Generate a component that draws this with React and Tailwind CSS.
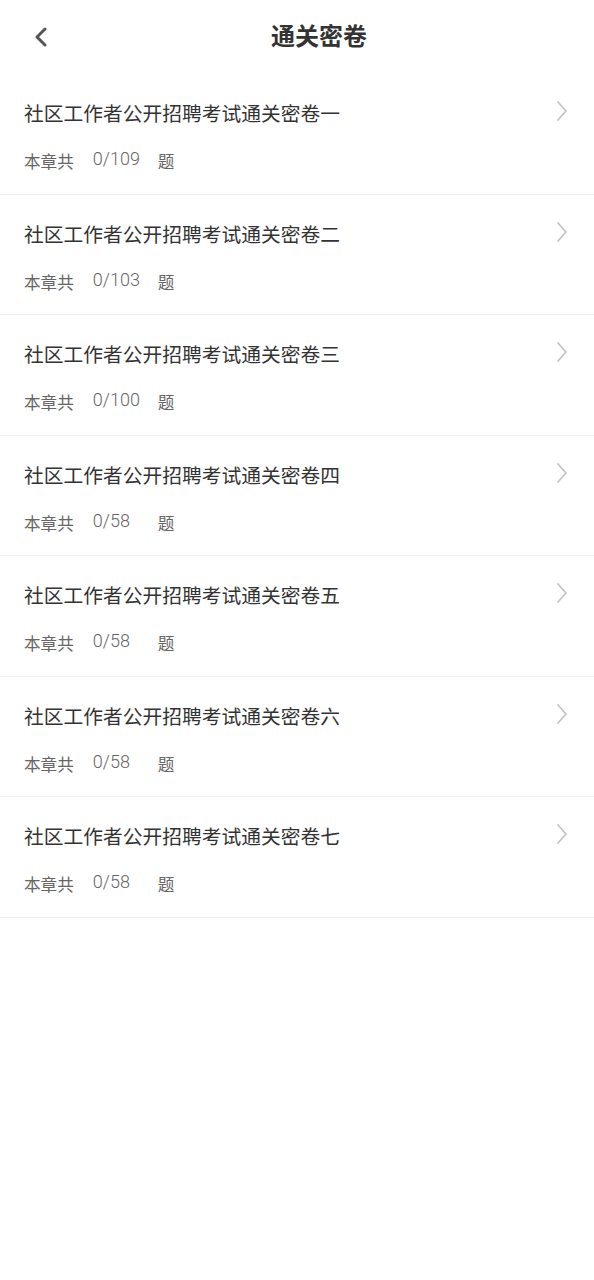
import React from "react";

const items = [
  ["一", "0/109"],
  ["二", "0/103"],
  ["三", "0/100"],
  ["四", "0/58"],
  ["五", "0/58"],
  ["六", "0/58"],
  ["七", "0/58"],
];

const font = { fontFamily: '"Noto Sans CJK SC", "Noto Sans", Roboto, sans-serif' };

export default function App() {
  return (
    <div className="w-[594px] min-h-[1280px] bg-white" style={font}>
      <div className="relative flex h-[74px] items-start pt-[23px] pl-[271px]">
        <svg className="absolute left-[32px] top-[26px]" width="18" height="22" viewBox="0 0 18 22" fill="none">
          <path d="M13 3 L5 11 L13 19" stroke="#555" strokeWidth="3" strokeLinecap="round" strokeLinejoin="round" />
        </svg>
        <h1 className="text-[24px] font-bold text-[#333] leading-[24px]">通关密卷</h1>
      </div>
      <div className="flex flex-col">
        {items.map(([n, c]) => (
          <div key={n} className="relative h-[120.5px] border-b border-[#f0f0f0] px-[24px]">
            <div className="pt-[27px] text-[19.75px] leading-[24px] text-[#333]">社区工作者公开招聘考试通关密卷{n}</div>
            <div className="mt-[26px] flex items-center text-[16.6px] leading-[20px] text-[#666]">
              <span>本章共</span>
              <span className="ml-[19px] w-[65px] text-[18px] font-light leading-[20px] -translate-y-[2px] text-[#666]" style={{ fontFamily: 'Roboto, "Noto Sans", sans-serif' }}>{c}</span>
              <span>题</span>
            </div>
            <svg className="absolute right-[26px] top-[26px]" width="12" height="22" viewBox="0 0 12 22" fill="none">
              <path d="M2 2 L10 11 L2 20" stroke="#c4c4c4" strokeWidth="1.8" strokeLinecap="round" strokeLinejoin="round" />
            </svg>
          </div>
        ))}
      </div>
    </div>
  );
}
